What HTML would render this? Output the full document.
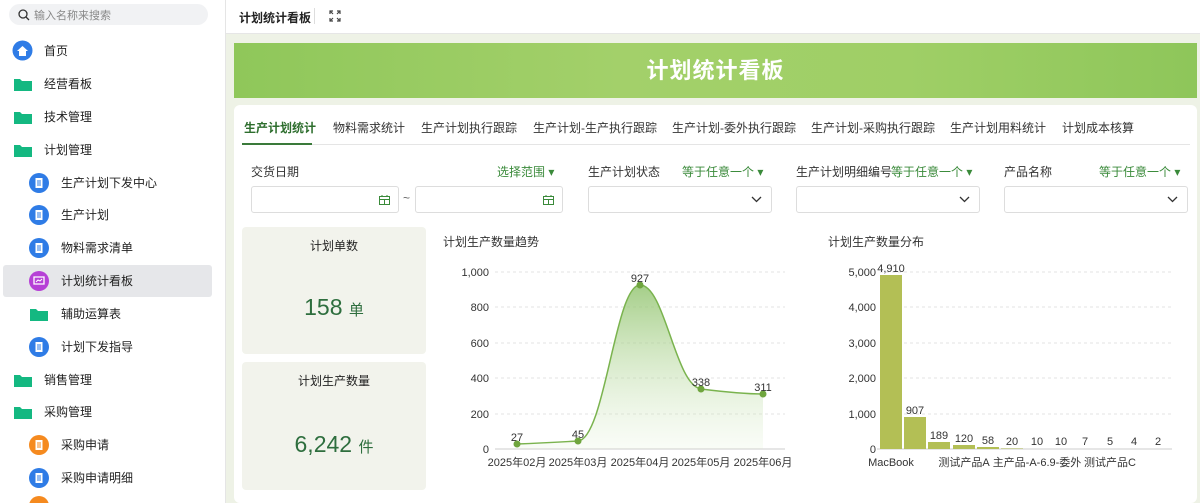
<!DOCTYPE html><html><head><meta charset="utf-8"><style>
*{box-sizing:border-box;margin:0;padding:0}
html{width:1200px;height:503px;overflow:hidden}
body{width:1200px;height:503px;overflow:hidden;font-family:"Liberation Sans","Noto Sans CJK SC",sans-serif;font-size:12px;color:#222;background:#eef2e6;position:relative}
.side{position:absolute;left:0;top:0;width:226px;height:503px;background:#fff;border-right:1px solid #e5e5e5;overflow:hidden}
.search{position:absolute;left:9px;top:4px;width:199px;height:21px;background:#f1f2f4;border-radius:11px;color:#888;font-size:11px;padding:3px 0 0 25px}
.search svg{position:absolute;left:9px;top:5px}
.it{position:absolute;left:0;height:32px;width:226px;font-size:12px;line-height:32px}
.it .ic{position:absolute;top:7px}
.it span{position:absolute}
.sel{background:#e6e7ea;left:3px;width:209px;border-radius:3px}
.top{position:absolute;left:226px;top:0;width:974px;height:34px;background:#fff;border-bottom:1px solid #e6e6e6}
.banner{position:absolute;left:234px;top:43px;width:963px;height:55px;background:linear-gradient(90deg,#8fc75a,#a3d06a 40%,#9fcf66 70%,#8ec65a);color:#fff;font-size:22px;font-weight:bold;text-align:center;line-height:55px;letter-spacing:1px}
.card{position:absolute;left:234px;top:105px;width:963px;height:398px;background:#fff;border-radius:6px}
.tabs{position:absolute;left:8px;top:10px;width:948px;height:30px;border-bottom:1px solid #e5e5e5}
.tabs span{position:absolute;top:4px;font-size:12px;color:#333}
.lbl{position:absolute;font-size:12px;color:#333}
.grn{position:absolute;font-size:12px;color:#3a8a3a}
.inp{position:absolute;height:27px;border:1px solid #ddd;border-radius:3px;background:#fff}
.stat{position:absolute;left:8px;width:184px;background:#f2f3ec;border-radius:4px;text-align:center}
</style></head><body>
<div class="side">
<div class="search"><svg width="12" height="12" viewBox="0 0 12 12"><circle cx="5" cy="5" r="4" fill="none" stroke="#333" stroke-width="1.3"/><path d="M8 8l3 3" stroke="#333" stroke-width="1.3"/></svg>输入名称来搜索</div>
<div class="it" style="top:35px"><svg class="ic" style="left:12px;top:5px" width="21" height="21"><circle cx="10.5" cy="10.5" r="10" fill="#2f7ce6"/><path d="M5 11l5.5-5 5.5 5h-2v5h-7v-5z" fill="#fff"/></svg><span style="left:44px">首页</span></div>
<div class="it" style="top:68px"><svg class="ic" style="left:14px;top:10px" width="18" height="13"><path d="M0 1h6l2 2h10v10H0z" fill="#14b881"/></svg><span style="left:44px">经营看板</span></div>
<div class="it" style="top:101px"><svg class="ic" style="left:14px;top:10px" width="18" height="13"><path d="M0 1h6l2 2h10v10H0z" fill="#14b881"/></svg><span style="left:44px">技术管理</span></div>
<div class="it" style="top:134px"><svg class="ic" style="left:14px;top:10px" width="18" height="13"><path d="M0 1h6l2 2h10v10H0z" fill="#14b881"/></svg><span style="left:44px">计划管理</span></div>
<div class="it" style="top:167px"><svg class="ic" style="left:29px;top:6px" width="20" height="20"><circle cx="10" cy="10" r="10" fill="#2f7ce6"/><path d="M6.5 5h7v10h-7z" fill="#fff"/><path d="M8 8h4M8 10h4M8 12h4" stroke="#2f7ce6"/></svg><span style="left:61px">生产计划下发中心</span></div>
<div class="it" style="top:199px"><svg class="ic" style="left:29px;top:6px" width="20" height="20"><circle cx="10" cy="10" r="10" fill="#2f7ce6"/><path d="M6.5 5h7v10h-7z" fill="#fff"/><path d="M8 8h4M8 10h4M8 12h4" stroke="#2f7ce6"/></svg><span style="left:61px">生产计划</span></div>
<div class="it" style="top:232px"><svg class="ic" style="left:29px;top:6px" width="20" height="20"><circle cx="10" cy="10" r="10" fill="#2f7ce6"/><path d="M6.5 5h7v10h-7z" fill="#fff"/><path d="M8 8h4M8 10h4M8 12h4" stroke="#2f7ce6"/></svg><span style="left:61px">物料需求清单</span></div>
<div class="it sel" style="top:265px"><svg class="ic" style="left:26px;top:6px" width="20" height="20"><circle cx="10" cy="10" r="10" fill="#b640d6"/><path d="M5 6h10v7H5z" fill="none" stroke="#fff" stroke-width="1.3"/><path d="M7 11l2-2 2 1 2-2" stroke="#fff" fill="none"/></svg><span style="left:58px">计划统计看板</span></div>
<div class="it" style="top:298px"><svg class="ic" style="left:30px;top:10px" width="18" height="13"><path d="M0 1h6l2 2h10v10H0z" fill="#14b881"/></svg><span style="left:61px">辅助运算表</span></div>
<div class="it" style="top:331px"><svg class="ic" style="left:29px;top:6px" width="20" height="20"><circle cx="10" cy="10" r="10" fill="#2f7ce6"/><path d="M6.5 5h7v10h-7z" fill="#fff"/><path d="M8 8h4M8 10h4M8 12h4" stroke="#2f7ce6"/></svg><span style="left:61px">计划下发指导</span></div>
<div class="it" style="top:364px"><svg class="ic" style="left:14px;top:10px" width="18" height="13"><path d="M0 1h6l2 2h10v10H0z" fill="#14b881"/></svg><span style="left:44px">销售管理</span></div>
<div class="it" style="top:396px"><svg class="ic" style="left:14px;top:10px" width="18" height="13"><path d="M0 1h6l2 2h10v10H0z" fill="#14b881"/></svg><span style="left:44px">采购管理</span></div>
<div class="it" style="top:429px"><svg class="ic" style="left:29px;top:6px" width="20" height="20"><circle cx="10" cy="10" r="10" fill="#f58a1f"/><path d="M6.5 5h7v10h-7z" fill="#fff"/><path d="M8 8h4M8 10h4M8 12h4" stroke="#f58a1f"/></svg><span style="left:61px">采购申请</span></div>
<div class="it" style="top:462px"><svg class="ic" style="left:29px;top:6px" width="20" height="20"><circle cx="10" cy="10" r="10" fill="#2f7ce6"/><path d="M6.5 5h7v10h-7z" fill="#fff"/><path d="M8 8h4M8 10h4M8 12h4" stroke="#2f7ce6"/></svg><span style="left:61px">采购申请明细</span></div>
<svg style="position:absolute;left:29px;top:496px" width="20" height="7"><circle cx="10" cy="10" r="10" fill="#f58a1f"/></svg>
</div>
<div class="top"><span style="position:absolute;left:13px;top:9px;font-weight:bold;font-size:12px">计划统计看板</span><div style="position:absolute;left:88px;top:8px;width:1px;height:16px;background:#ddd"></div><svg style="position:absolute;left:103px;top:10px" width="12" height="12" fill="none" stroke="#444" stroke-width="1.2"><path d="M1 4V1h3M8 1h3v3M11 8v3H8M4 11H1V8M1 1l3 3M11 1L8 4M11 11L8 8M1 11l3-3"/></svg></div>
<div class="banner">计划统计看板</div>
<div class="card">
<div class="tabs"><span style="left:2px;color:#2e6e2e;font-weight:bold">生产计划统计</span><div style="position:absolute;left:0;top:28px;width:70px;height:2px;background:#3a7a3a"></div>
<span style="left:91px">物料需求统计</span><span style="left:179px">生产计划执行跟踪</span><span style="left:291px">生产计划-生产执行跟踪</span><span style="left:430px">生产计划-委外执行跟踪</span><span style="left:569px">生产计划-采购执行跟踪</span><span style="left:708px">生产计划用料统计</span><span style="left:820px">计划成本核算</span></div>
<div class="lbl" style="left:17px;top:58px">交货日期</div><div class="grn" style="left:263px;top:58px">选择范围 ▾</div>
<div class="lbl" style="left:354px;top:58px">生产计划状态</div><div class="grn" style="left:448px;top:58px">等于任意一个 ▾</div>
<div class="lbl" style="left:562px;top:58px">生产计划明细编号</div><div class="grn" style="left:657px;top:58px">等于任意一个 ▾</div>
<div class="lbl" style="left:770px;top:58px">产品名称</div><div class="grn" style="left:865px;top:58px">等于任意一个 ▾</div>
<div class="inp" style="left:17px;top:81px;width:148px"><svg style="position:absolute;right:8px;top:8px" width="11" height="10" fill="none" stroke="#3a8a3a"><rect x=".5" y="1.5" width="10" height="8"/><path d="M.5 4.5h10M5.5 4.5v5M3 0v2M8 0v2"/></svg></div>
<div style="position:absolute;left:169px;top:86px;color:#666">~</div>
<div class="inp" style="left:181px;top:81px;width:148px"><svg style="position:absolute;right:8px;top:8px" width="11" height="10" fill="none" stroke="#3a8a3a"><rect x=".5" y="1.5" width="10" height="8"/><path d="M.5 4.5h10M5.5 4.5v5M3 0v2M8 0v2"/></svg></div>
<div class="inp" style="left:354px;top:81px;width:184px"><svg style="position:absolute;right:9px;top:9px" width="11" height="7" fill="none" stroke="#333" stroke-width="1.3"><path d="M1 1l4.5 4.5L10 1"/></svg></div>
<div class="inp" style="left:562px;top:81px;width:184px"><svg style="position:absolute;right:9px;top:9px" width="11" height="7" fill="none" stroke="#333" stroke-width="1.3"><path d="M1 1l4.5 4.5L10 1"/></svg></div>
<div class="inp" style="left:770px;top:81px;width:184px"><svg style="position:absolute;right:9px;top:9px" width="11" height="7" fill="none" stroke="#333" stroke-width="1.3"><path d="M1 1l4.5 4.5L10 1"/></svg></div>
<div class="stat" style="top:122px;height:127px"><div style="margin-top:10px;font-size:12px">计划单数</div><div style="margin-top:40px;font-size:23px;color:#2e6e3e">158 <span style="font-size:15px">单</span></div></div>
<div class="stat" style="top:257px;height:128px"><div style="margin-top:10px;font-size:12px">计划生产数量</div><div style="margin-top:42px;font-size:23px;color:#2e6e3e">6,242 <span style="font-size:15px">件</span></div></div>
</div>
<svg style="position:absolute;left:0;top:0" width="1200" height="503" font-family="Liberation Sans,Noto Sans CJK SC,sans-serif" font-size="11">
<defs><linearGradient id="g" x1="0" y1="0" x2="0" y2="1"><stop offset="0" stop-color="#8ec26a" stop-opacity=".8"/><stop offset="1" stop-color="#d8ebc8" stop-opacity=".15"/></linearGradient></defs>
<text x="443" y="246" font-size="12" fill="#333">计划生产数量趋势</text>
<g stroke="#e3e3e3" stroke-dasharray="3,3"><path d="M495 272H785M495 307H785M495 343H785M495 378H785M495 414H785M880 272H1171M880 307H1171M880 343H1171M880 378H1171M880 414H1171"/></g>
<g fill="#333" text-anchor="end"><text x="489" y="276">1,000</text><text x="489" y="311">800</text><text x="489" y="347">600</text><text x="489" y="382">400</text><text x="489" y="418">200</text><text x="489" y="453">0</text></g>
<path d="M495 449H785" stroke="#ccc"/>
<path d="M517 444C545 443 560 442 578 441C605 439 615 285 640 285C665 285 675 385 701 389C725 392 745 394 763 394L763 449L517 449Z" fill="url(#g)"/>
<path d="M517 444C545 443 560 442 578 441C605 439 615 285 640 285C665 285 675 385 701 389C725 392 745 394 763 394" fill="none" stroke="#7ab34e" stroke-width="1.5"/>
<g fill="#6fa53e"><circle cx="517" cy="444" r="3.5"/><circle cx="578" cy="441" r="3.5"/><circle cx="640" cy="285" r="3.5"/><circle cx="701" cy="389" r="3.5"/><circle cx="763" cy="394" r="3.5"/></g>
<g fill="#333" text-anchor="middle"><text x="517" y="441">27</text><text x="578" y="438">45</text><text x="640" y="282">927</text><text x="701" y="386">338</text><text x="763" y="391">311</text>
<text x="517" y="466">2025年02月</text><text x="578" y="466">2025年03月</text><text x="640" y="466">2025年04月</text><text x="701" y="466">2025年05月</text><text x="763" y="466">2025年06月</text></g>
<text x="828" y="246" font-size="12" fill="#333">计划生产数量分布</text>
<g fill="#333" text-anchor="end"><text x="876" y="276">5,000</text><text x="876" y="311">4,000</text><text x="876" y="347">3,000</text><text x="876" y="382">2,000</text><text x="876" y="418">1,000</text><text x="876" y="453">0</text></g>
<path d="M877 449H1172" stroke="#ccc"/>
<g fill="#b3bf55"><rect x="880" y="275" width="22" height="174"/><rect x="904" y="417" width="22" height="32"/><rect x="928" y="442" width="22" height="7"/><rect x="953" y="445" width="22" height="4"/><rect x="977" y="447" width="22" height="2"/><rect x="1001" y="448" width="22" height="1" opacity=".5"/></g>
<g fill="#333" text-anchor="middle"><text x="891" y="272">4,910</text><text x="915" y="414">907</text><text x="939" y="439">189</text><text x="964" y="442">120</text><text x="988" y="444">58</text><text x="1012" y="445">20</text><text x="1037" y="445">10</text><text x="1061" y="445">10</text><text x="1085" y="445">7</text><text x="1110" y="445">5</text><text x="1134" y="445">4</text><text x="1158" y="445">2</text>
<text x="891" y="466">MacBook</text><text x="964" y="466">测试产品A</text><text x="1037" y="466">主产品-A-6.9-委外</text><text x="1110" y="466">测试产品C</text></g>
</svg>
</body></html>
